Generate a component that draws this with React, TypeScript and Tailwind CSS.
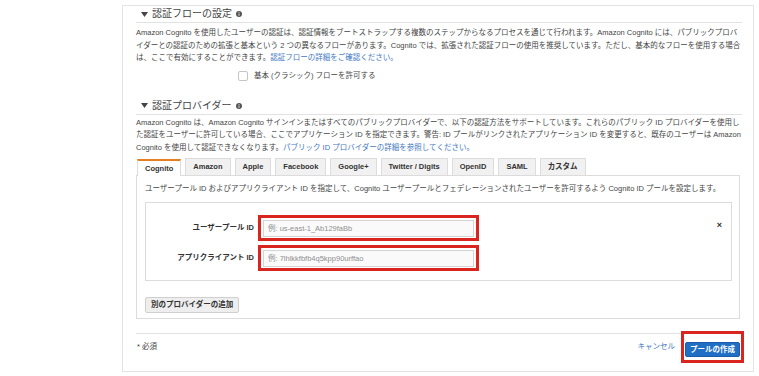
import React from "react";

const font = { fontFamily: '"Liberation Sans", "Noto Sans CJK JP", sans-serif' };

const Caret = () => (
  <svg width="7" height="5" viewBox="0 0 7 5" className="shrink-0">
    <path d="M0 0 L7 0 L3.5 5 Z" fill="#444" />
  </svg>
);

const Info = () => (
  <svg width="6" height="6" viewBox="0 0 6 6" className="shrink-0">
    <circle cx="3" cy="3" r="3" fill="#555" />
    <rect x="2.6" y="2.5" width="0.8" height="2.3" fill="#fff" />
    <rect x="2.6" y="1.2" width="0.8" height="0.8" fill="#fff" />
  </svg>
);

const SectionHeader = ({ title }: { title: string }) => (
  <div className="h-[17px] flex items-center gap-[4px] pl-[5px] border-b border-[#e2e2e2]">
    <Caret />
    <span className="text-[10px] text-[#444] leading-none">{title}</span>
    <Info />
  </div>
);

const tabs = ["Cognito", "Amazon", "Apple", "Facebook", "Google+", "Twitter / Digits", "OpenID", "SAML", "カスタム"];

const Field = ({ label, placeholder }: { label: string; placeholder: string }) => (
  <div className="flex items-center gap-[4px]">
    <div className="w-[108px] text-right text-[7.5px] font-bold text-[#333]">{label}</div>
    <div className="w-[221px] h-[26px] border-[3px] border-[#d9251d] flex items-center px-[2px]">
      <input
        readOnly
        placeholder={placeholder}
        className="w-full h-[17px] border border-[#d4d4d4] bg-[#fafafa] px-[4px] text-[7.5px] outline-none placeholder:text-[#8f8f8f]"
      />
    </div>
  </div>
);

export default function App() {
  return (
    <div className="w-[759px] h-[376px] bg-white flex text-[#444]" style={font}>
      <div className="w-[122px] shrink-0" />
      <div className="w-[632px] h-[367px] mt-[5px] border border-[#e3e3e3] flex flex-col pl-[13px] pr-[11px]">
        <SectionHeader title="認証フローの設定" />
        <div className="mt-[4px] text-[7.5px] leading-[12.5px] whitespace-nowrap">
          <div>Amazon Cognito を使用したユーザーの認証は、認証情報をブートストラップする複数のステップからなるプロセスを通じて行われます。Amazon Cognito には、パブリックプロバ</div>
          <div>イダーとの認証のための拡張と基本という 2 つの異なるフローがあります。Cognito では、拡張された認証フローの使用を推奨しています。ただし、基本的なフローを使用する場合</div>
          <div>
            は、ここで有効にすることができます。<span className="text-[#3f79c2]">認証フローの詳細をご確認ください。</span>
          </div>
        </div>
        <label className="mt-[5px] ml-[102px] flex items-center gap-[6px] h-[12px]">
          <span className="w-[10px] h-[10px] rounded-[2px] border border-[#c4c4c4] bg-white" />
          <span className="text-[7.5px]">基本 (クラシック) フローを許可する</span>
        </label>

        <div className="mt-[16px]">
          <SectionHeader title="認証プロバイダー" />
        </div>
        <div className="mt-[2px] text-[7.5px] leading-[12.5px] whitespace-nowrap">
          <div>Amazon Cognito は、Amazon Cognito サインインまたはすべてのパブリックプロバイダーで、以下の認証方法をサポートしています。これらのパブリック ID プロバイダーを使用し</div>
          <div>た認証をユーザーに許可している場合、ここでアプリケーション ID を指定できます。警告: ID プールがリンクされたアプリケーション ID を変更すると、既存のユーザーは Amazon</div>
          <div>
            Cognito を使用して認証できなくなります。<span className="text-[#3f79c2]">パブリック ID プロバイダーの詳細を参照してください。</span>
          </div>
        </div>

        <div className="mt-[4px] flex items-end gap-[4px] pl-[1px] h-[17px]">
          {tabs.map((t, i) =>
            i === 0 ? (
              <div
                key={t}
                className="h-[17px] px-[7px] flex items-center bg-white border-x border-t-2 border-[#dcdcdc] border-t-[#e47f22] text-[7.5px] font-bold text-[#333] -mb-px relative z-10"
              >
                {t}
              </div>
            ) : (
              <div
                key={t}
                className="h-[17px] px-[7px] flex items-center bg-[#f1f1f1] border-x border-t border-[#dcdcdc] text-[7.5px] font-bold text-[#333]"
              >
                {t}
              </div>
            )
          )}
        </div>
        <div className="mr-[2px] h-[144px] border border-[#dcdcdc] px-[8px] pt-[7px]">
          <div className="text-[7.5px] leading-[12px] whitespace-nowrap">
            ユーザープール ID およびアプリクライアント ID を指定して、Cognito ユーザープールとフェデレーションされたユーザーを許可するよう Cognito ID プールを設定します。
          </div>
          <div className="mt-[7px] mr-[-1px] h-[79px] border border-[#dcdcdc] flex justify-between pt-[12px] pr-[9px]">
            <div className="flex flex-col gap-[4px]">
              <Field label="ユーザープール ID" placeholder="例: us-east-1_Ab129faBb" />
              <Field label="アプリクライアント ID" placeholder="例: 7lhlkkfbfb4q5kpp90urffao" />
            </div>
            <div className="text-[9px] font-bold text-[#333] leading-none mt-[6px]">×</div>
          </div>
          <button className="mt-[16px] h-[16px] px-[5px] bg-[#eeeeee] border border-[#d0d0d0] rounded-[2px] text-[7.5px] font-bold text-[#333]">
            別のプロバイダーの追加
          </button>
        </div>

        <div className="mt-[14px] border-t border-[#e2e2e2] flex items-center justify-between h-[27px] pl-[1px]">
          <span className="text-[7.5px] text-[#444]">* 必須</span>
          <div className="flex items-center gap-[6px] -mr-[2px]">
            <span className="text-[7.5px] text-[#3f79c2]">キャンセル</span>
            <div className="border-[3px] border-[#d9251d] p-px">
              <button className="h-[15px] px-[4px] bg-[#1f6fc5] border border-[#1a5ca8] rounded-[2px] text-[7.5px] font-bold text-white">
                プールの作成
              </button>
            </div>
          </div>
        </div>
      </div>
    </div>
  );
}
